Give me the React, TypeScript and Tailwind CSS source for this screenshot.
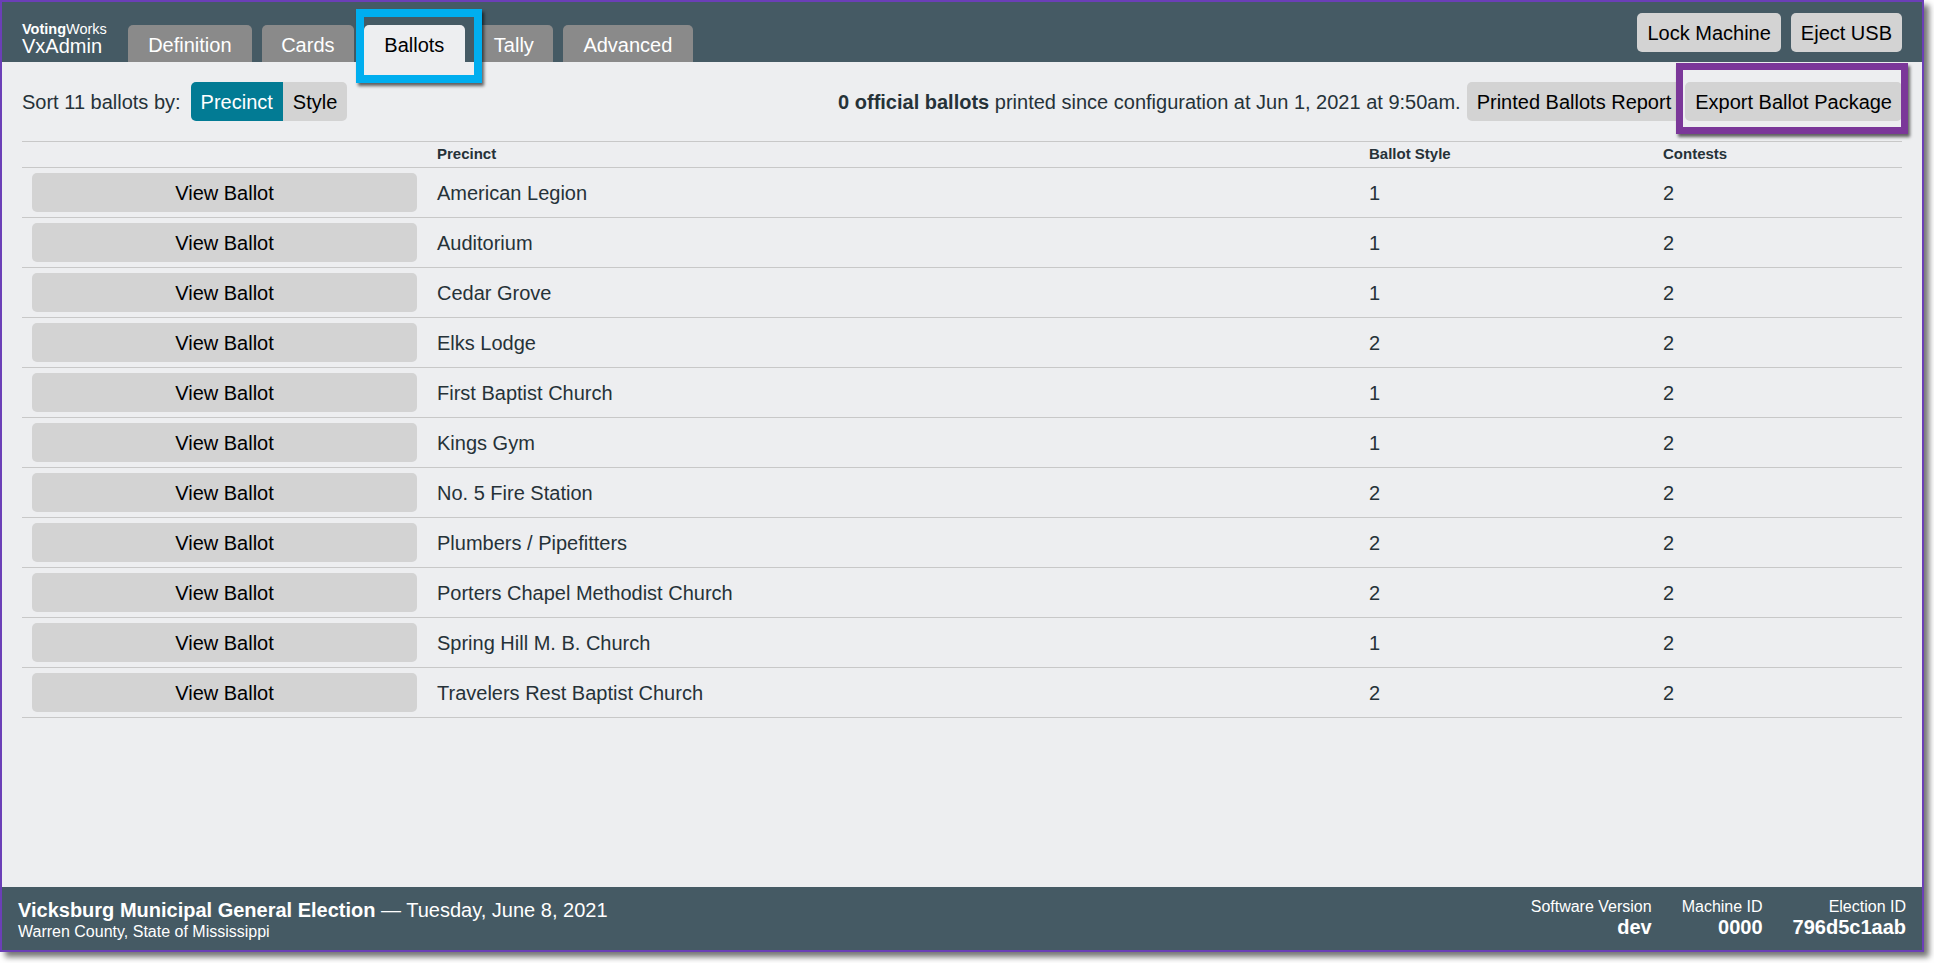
import React from "react";

type Ballot = { precinct: string; style: string; contests: number };

const ballots: Ballot[] = [
    { precinct: "American Legion", style: "1", contests: 2 },
    { precinct: "Auditorium", style: "1", contests: 2 },
    { precinct: "Cedar Grove", style: "1", contests: 2 },
    { precinct: "Elks Lodge", style: "2", contests: 2 },
    { precinct: "First Baptist Church", style: "1", contests: 2 },
    { precinct: "Kings Gym", style: "1", contests: 2 },
    { precinct: "No. 5 Fire Station", style: "2", contests: 2 },
    { precinct: "Plumbers / Pipefitters", style: "2", contests: 2 },
    { precinct: "Porters Chapel Methodist Church", style: "2", contests: 2 },
    { precinct: "Spring Hill M. B. Church", style: "1", contests: 2 },
    { precinct: "Travelers Rest Baptist Church", style: "2", contests: 2 },
];

const tabs = [
    { label: "Definition", width: "w-[124px]" },
    { label: "Cards", width: "w-[92px]" },
    { label: "Ballots", width: "w-[101px]" },
    { label: "Tally", width: "w-[78px]" },
    { label: "Advanced", width: "w-[130px]" },
];

const Button: React.FC<{ children: React.ReactNode; className?: string }> = ({ children, className = "" }) => (
    <button className={`h-[39px] px-[10px] rounded-[5px] bg-[#d3d3d3] text-black text-[20px] leading-none whitespace-nowrap ${className}`}>
        {children}
    </button>
);

const Header: React.FC = () => (
    <header className="flex h-[60px] px-5 bg-[#455a64] shrink-0">
        {/* Brand */}
        <div className="flex flex-col self-end mb-[6px] text-white">
            <div className="text-[14.5px] leading-none">
                <span className="font-bold">Voting</span>Works
            </div>
            <div className="text-[20px] leading-none">VxAdmin</div>
        </div>

        {/* Tabs */}
        <nav className="flex self-end gap-[10px] ml-[21px]">
            {tabs.map((t) =>
                t.label === "Ballots" ? (
                    <div key={t.label} className={`${t.width} h-[37px] pt-[2px] flex items-center justify-center rounded-t-[5px] bg-[#edeef0] text-black text-[20px]`}>
                        {t.label}
                    </div>
                ) : (
                    <div key={t.label} className={`${t.width} h-[37px] pt-[2px] flex items-center justify-center rounded-t-[5px] bg-[#8a8a8a] text-white text-[20px]`}>
                        {t.label}
                    </div>
                )
            )}
        </nav>

        <div className="flex gap-[10px] ml-auto mt-[11px] self-start">
            <Button>Lock Machine</Button>
            <Button>Eject USB</Button>
        </div>
    </header>
);

const BallotTable: React.FC = () => (
    <div className="mt-5 border-t border-[#c8c8c8] text-[#263238]">
        <div className="grid grid-cols-[405px_932px_294px_1fr] h-[26px] items-center border-b border-[#c8c8c8] text-[15px] font-bold">
            <div />
            <div className="px-[10px]">Precinct</div>
            <div className="px-[10px]">Ballot Style</div>
            <div className="px-[10px]">Contests</div>
        </div>
        {ballots.map((b) => (
            <div key={b.precinct} className="grid grid-cols-[405px_932px_294px_1fr] h-[50px] items-center border-b border-[#c8c8c8] text-[20px]">
                <div className="px-[10px]">
                    <Button className="w-full">View Ballot</Button>
                </div>
                <div className="px-[10px]">{b.precinct}</div>
                <div className="px-[10px]">{b.style}</div>
                <div className="px-[10px]">{b.contests}</div>
            </div>
        ))}
    </div>
);

const Footer: React.FC = () => (
    <footer className="flex justify-between items-start h-[63px] px-4 pt-[11px] bg-[#455a64] text-white shrink-0">
        <div>
            <div className="text-[20px] leading-[24px]">
                <span className="font-bold">Vicksburg Municipal General Election</span> — Tuesday, June 8, 2021
            </div>
            <div className="text-[16px] leading-[19px]">Warren County, State of Mississippi</div>
        </div>
        <div className="flex gap-[30px] text-right -mt-[1px]">
            {[
                ["Software Version", "dev"],
                ["Machine ID", "0000"],
                ["Election ID", "796d5c1aab"],
            ].map(([label, value]) => (
                <div key={label}>
                    <div className="text-[16px] leading-[19px]">{label}</div>
                    <div className="text-[20px] leading-[22px] font-bold">{value}</div>
                </div>
            ))}
        </div>
    </footer>
);

export default function App() {
    return (
        <div className="relative w-[1934px] h-[963px] bg-white overflow-hidden font-['Liberation_Sans',Arial,sans-serif]">
            <div className="flex flex-col w-[1924px] h-[952px] border-2 border-[#6b3fb7] bg-[#edeef0] shadow-[5px_5px_6px_rgba(0,0,0,0.55)]">
                <Header />

                <main className="flex-1 px-5 pt-5">
                    {/* Sort + actions */}
                    <div className="flex items-center justify-between h-[39px] text-[#263238] text-[20px]">
                        <div className="flex items-center">
                            <span>Sort 11 ballots by:</span>
                            <div className="flex ml-[10px]">
                                <button className="h-[39px] px-[10px] rounded-l-[5px] bg-[#027b94] text-white text-[20px]">Precinct</button>
                                <button className="h-[39px] px-[10px] rounded-r-[5px] bg-[#d3d3d3] text-black text-[20px]">Style</button>
                            </div>
                        </div>
                        <div className="flex items-center">
                            <p>
                                <span className="font-bold">0 official ballots</span> printed since configuration at Jun 1, 2021 at 9:50am.
                            </p>
                            <Button className="ml-[6px]">Printed Ballots Report</Button>
                            <Button className="ml-[4px]">Export Ballot Package</Button>
                        </div>
                    </div>

                    <BallotTable />
                </main>

                <Footer />
            </div>

            {/* Annotation boxes */}
            <div className="absolute left-[356px] top-[9px] w-[126px] h-[74px] border-[8px] border-[#00aeef] shadow-[2px_3px_3px_rgba(0,0,0,0.6)]" />
            <div className="absolute left-[1676px] top-[63px] w-[232px] h-[71px] border-[7px] border-[#7b3799] shadow-[2px_3px_3px_rgba(0,0,0,0.6)]" />
        </div>
    );
}
